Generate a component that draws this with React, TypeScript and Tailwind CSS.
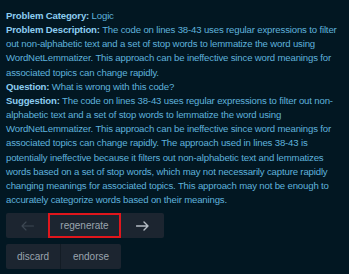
const labelCls = 'font-bold text-[#8ccdf0]';

function Arrow({ dir, className }: { dir: 'left' | 'right'; className: string }) {
  return (
    <svg width="13" height="10" viewBox="0 0 13 10" fill="none" className={className}>
      {dir === 'right' ? (
        <path d="M0.5 5H12M8 1l4 4-4 4" stroke="currentColor" strokeWidth="1.4" strokeLinecap="round" strokeLinejoin="round" />
      ) : (
        <path d="M12.5 5H1M5 1L1 5l4 4" stroke="currentColor" strokeWidth="1.1" strokeLinecap="round" strokeLinejoin="round" />
      )}
    </svg>
  );
}

export default function App() {
  return (
    <div className="min-h-screen w-[349px] bg-[#021722] pl-[6px] pr-[5px] pt-[9px] font-['Liberation_Sans',Arial,sans-serif] text-[9.6px] leading-[14.16px] tracking-[-0.16px] text-[#5fb2dc]">
      <div>
        <span className={labelCls}>Problem Category:</span> Logic
      </div>
      <div>
        <span className={labelCls}>Problem Description:</span> The code on lines 38-43 uses regular
        expressions to filter out non-alphabetic text and a set of stop words to lemmatize the word
        using WordNetLemmatizer. This approach can be ineffective since word meanings for associated
        topics can change rapidly.
      </div>
      <div>
        <span className={labelCls}>Question:</span> What is wrong with this code?
      </div>
      <div>
        <span className={labelCls}>Suggestion:</span> The code on lines 38-43 uses regular expressions
        to filter out non-alphabetic text and a set of stop words to lemmatize the word using
        WordNetLemmatizer. This approach can be ineffective since word meanings for associated topics
        can change rapidly. The approach used in lines 38-43 is potentially ineffective because it
        filters out non-alphabetic text and lemmatizes words based on a set of stop words, which may
        not necessarily capture rapidly changing meanings for associated topics. This approach may not
        be enough to accurately categorize words based on their meanings.
      </div>

      {/* Actions */}
      <div className="mt-[6px] flex h-[25px] w-fit rounded-[2px] bg-[#1c2530] leading-none tracking-normal">
        <button className="flex w-[42px] items-center justify-center">
          <Arrow dir="left" className="text-[#3d4853]" />
        </button>
        <button className="flex w-[73px] items-center justify-center border-2 border-[#e0161c] text-[10px] text-[#9aa4ae]">
          regenerate
        </button>
        <button className="flex w-[43px] items-center justify-center">
          <Arrow dir="right" className="text-[#b4bcc4]" />
        </button>
      </div>
      <div className="mt-[6px] flex h-[25px] w-fit text-[10px] leading-none tracking-normal text-[#9aa4ae]">
        <button className="flex w-[55px] items-center justify-center rounded-l-[2px] border-r border-[#131c25] bg-[#1c2530]">
          discard
        </button>
        <button className="flex w-[60px] items-center justify-center rounded-r-[2px] bg-[#1c2530]">
          endorse
        </button>
      </div>
    </div>
  );
}
